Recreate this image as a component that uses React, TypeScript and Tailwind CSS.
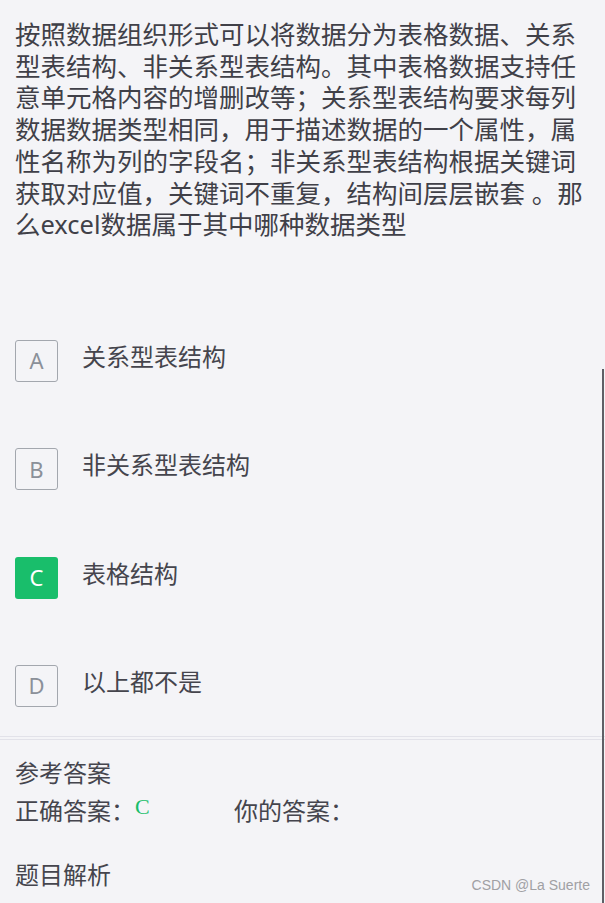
import React from 'react';

const options = [
  { key: 'A', label: '关系型表结构' },
  { key: 'B', label: '非关系型表结构' },
  { key: 'C', label: '表格结构', correct: true },
  { key: 'D', label: '以上都不是' },
];

const font = { fontFamily: '"Noto Sans", "Noto Sans CJK SC", sans-serif' };

export default function App() {
  return (
    <div
      className="relative w-[605px] h-[903px] overflow-hidden bg-[#f4f4f7] text-[#404048]"
      style={font}
    >
      {/* Question */}
      <div className="px-[15px] pt-[19px] w-[605px] text-[25.5px] leading-[31.7px]">
        按照数据组织形式可以将数据分为表格数据、关系型表结构、非关系型表结构。其中表格数据支持任意单元格内容的增删改等；关系型表结构要求每列数据数据类型相同，用于描述数据的一个属性，属性名称为列的字段名；非关系型表结构根据关键词获取对应值，关键词不重复，结构间层层嵌套 。那么excel数据属于其中哪种数据类型
      </div>

      {/* Options */}
      <div className="mt-[99px] px-[15px] flex flex-col gap-[65.3px]">
        {options.map((o) => (
          <div key={o.key} className="flex items-start h-[43px]">
            <div
              className={
                o.correct
                  ? 'w-[43px] h-[42px] rounded-[3px] bg-[#19be6b] text-white flex items-center justify-center text-[22px]'
                  : 'w-[43px] h-[42px] rounded-[3px] border border-[#a3a7ae] text-[#8b9099] flex items-center justify-center text-[22px]'
              }
            >
              {o.key}
            </div>
            <div className="ml-[24px] mt-[1px] text-[24px] leading-[32px] text-[#45454d]">{o.label}</div>
          </div>
        ))}
      </div>

      {/* Divider */}
      <div className="mt-[28px] h-[4px] border-y border-[#e2e2e9]" />

      {/* Answer block */}
      <div className="px-[15px] pt-[17px] text-[24px] leading-[32px] text-[#45454d]">
        <div>参考答案</div>
        <div className="mt-[6px] flex items-start">
          <div className="w-[219px] flex items-start">
            <span>正确答案：</span>
            <span
              className="text-[#19be6b] text-[22px] leading-[24px]"
              style={{ fontFamily: '"Liberation Serif", serif' }}
            >
              C
            </span>
          </div>
          <span>你的答案：</span>
        </div>
        <div className="mt-[32px]">题目解析</div>
      </div>

      {/* Scrollbar edge */}
      <div className="absolute right-[1px] top-[369px] bottom-0 w-[2px] bg-[#5f5f66]" />

      {/* Watermark */}
      <div
        className="absolute right-[15px] bottom-[7px] text-[14px] text-[#a0a0a4]"
        style={{ fontFamily: '"Liberation Sans", Arial, sans-serif' }}
      >
        CSDN @La Suerte
      </div>
    </div>
  );
}
